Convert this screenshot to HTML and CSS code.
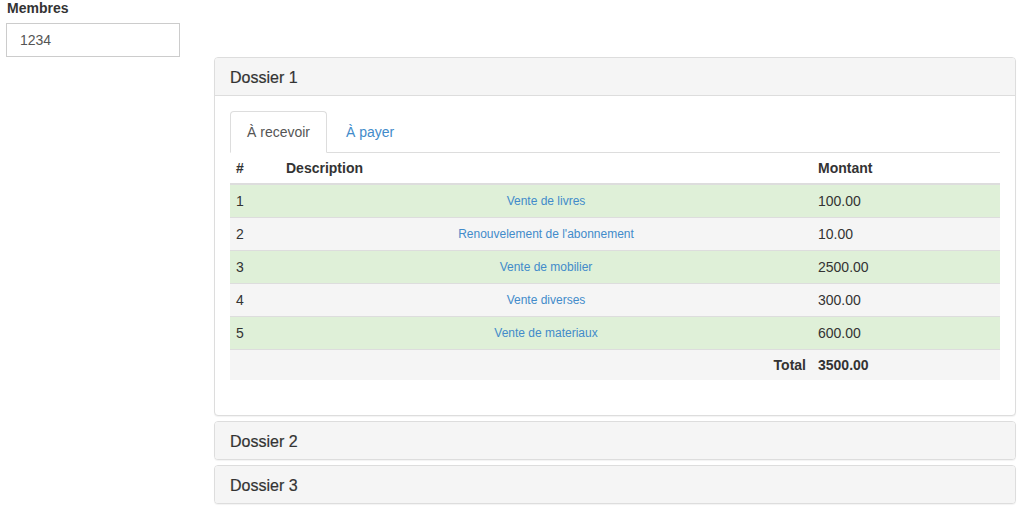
FILE: index.html
```html
<!DOCTYPE html>
<html lang="fr">
<head>
<meta charset="utf-8">
<title>Dossiers</title>
<link rel="stylesheet" href="styles.css">
</head>
<body>
<div class="form-group">
  <label class="label">Membres</label>
  <div class="input">1234</div>
</div>
<div class="panel-group">
  <div class="panel">
    <div class="panel-heading open">Dossier 1</div>
    <div class="panel-body">
      <ul class="nav-tabs">
        <li class="tab active">À recevoir</li>
        <li class="tab"><a href="#">À payer</a></li>
      </ul>
      <table class="table">
        <colgroup>
          <col class="c-num">
          <col class="c-desc">
          <col class="c-amt">
        </colgroup>
        <thead>
          <tr><th>#</th><th>Description</th><th>Montant</th></tr>
        </thead>
        <tbody>
          <tr class="success"><td>1</td><td class="desc"><a href="#">Vente de livres</a></td><td>100.00</td></tr>
          <tr class="grey"><td>2</td><td class="desc"><a href="#">Renouvelement de l'abonnement</a></td><td>10.00</td></tr>
          <tr class="success"><td>3</td><td class="desc"><a href="#">Vente de mobilier</a></td><td>2500.00</td></tr>
          <tr class="grey"><td>4</td><td class="desc"><a href="#">Vente diverses</a></td><td>300.00</td></tr>
          <tr class="success"><td>5</td><td class="desc"><a href="#">Vente de materiaux</a></td><td>600.00</td></tr>
          <tr class="grey total"><td></td><td class="total-label">Total</td><td class="total-value">3500.00</td></tr>
        </tbody>
      </table>
    </div>
  </div>
  <div class="panel">
    <div class="panel-heading">Dossier 2</div>
  </div>
  <div class="panel">
    <div class="panel-heading">Dossier 3</div>
  </div>
</div>
</body>
</html>
```
FILE: styles.css
```css
* { box-sizing: border-box; }

body {
  margin: 0;
  font-family: "Liberation Sans", Arial, Helvetica, sans-serif;
  font-size: 14px;
  line-height: 20px;
  color: #333;
  background: #fff;
}

a { color: #428bca; text-decoration: none; }

.form-group {
  padding-left: 6px;
}

.label {
  display: block;
  font-weight: bold;
  height: 20px;
  margin: -2px 0 5px 1px;
}

.input {
  width: 174px;
  height: 34px;
  border: 1px solid #ccc;
  padding: 6px 13px;
  line-height: 20px;
  font-size: 14px;
  color: #555;
}

.panel-group {
  margin-left: 214px;
  width: 802px;
}

.panel {
  border: 1px solid #ddd;
  border-radius: 4px;
  background: #fff;
  margin-bottom: 5px;
  box-shadow: 0 1px 1px rgba(0,0,0,0.05);
}

.panel-heading {
  background: #f5f5f5;
  padding: 11px 15px 9px;
  font-size: 16px;
  line-height: 17px;
  height: 37px;
  color: #333;
  border-radius: 3px;
  -webkit-text-stroke: 0.2px #333;
}

.panel-heading.open {
  border-bottom: 1px solid #ddd;
  height: 38px;
  border-radius: 3px 3px 0 0;
}

.panel-body {
  padding: 15px;
}

.nav-tabs {
  list-style: none;
  margin: 0;
  padding: 0;
  display: flex;
  border-bottom: 1px solid #ddd;
}

.tab {
  margin-right: 2px;
  margin-bottom: -1px;
  padding: 10px 16px;
  line-height: 20px;
  border: 1px solid transparent;
  border-radius: 4px 4px 0 0;
  height: 42px;
}

.tab.active {
  border-color: #ddd;
  border-bottom-color: #fff;
  background: #fff;
  color: #555;
}

.table {
  width: 770px;
  border-collapse: collapse;
  border-spacing: 0;
  margin-bottom: 20px;
  table-layout: fixed;
}

.c-num { width: 50px; }
.c-desc { width: 532px; }
.c-amt { width: 188px; }

.table th {
  text-align: left;
  font-weight: bold;
  padding: 5px 6px;
  line-height: 20px;
  border-bottom: 2px solid #ddd;
  vertical-align: bottom;
}

.table td {
  padding: 6px 6px;
  line-height: 20px;
  border-top: 1px solid #ddd;
  vertical-align: top;
}

.table tbody tr:first-child td {
  border-top: 0;
}

.table td.desc {
  text-align: center;
  font-size: 12px;
}

.success td { background: #dff0d8; }
.grey td { background: #f5f5f5; }

.table tr.total td {
  padding: 5px 6px;
}

.total-label {
  text-align: right;
  font-weight: bold;
}

.total-value {
  font-weight: bold;
}
```
